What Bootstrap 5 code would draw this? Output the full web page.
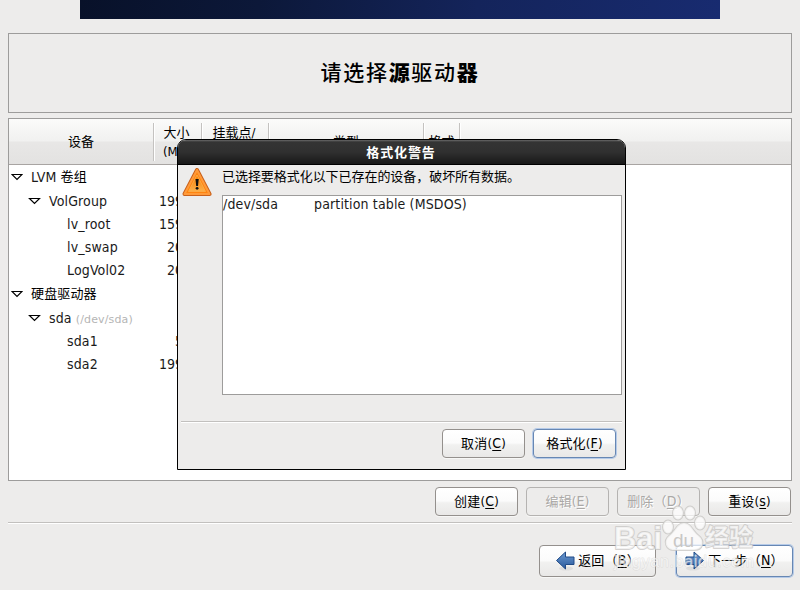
<!DOCTYPE html>
<html lang="zh-CN">
<head>
<meta charset="utf-8">
<title>请选择源驱动器</title>
<link href="https://cdn.jsdelivr.net/npm/bootstrap@5.3.0/dist/css/bootstrap.min.css" rel="stylesheet">
<style>
body{width:800px;height:590px;overflow:hidden;background:#edeceb;color:#1a1a1a;font:14px/18px "DejaVu Sans Condensed","DejaVu Sans","Noto Sans CJK SC",sans-serif;font-stretch:condensed}
.zh{font-size:13px;color:#000}
.banner{width:640px;height:19px;background:linear-gradient(97deg,#081129 0%,#0c1839 28%,#14245b 62%,#182b70 100%)}
.frame{border:1px solid #9d9c9b;margin:0 8px}
.page-title{height:80px;margin-top:14px;font-size:21px;font-weight:500;letter-spacing:1.7px;color:#000}
.page-title b{font-weight:900}
.tree{height:363px;margin-top:5px;background:#fff}
.tree-head{height:46px;border-bottom:1px solid #a8a4a2;background:linear-gradient(#fbfbfa 0,#f1f1f0 48%,#e8e7e6 52%,#e3e2e1 100%);padding:4px 0 3px;font-size:13px;color:#000}
.tree-head>div{border-right:1px solid #c4c2c0;box-shadow:1px 0 #fff;flex:none;text-align:center;line-height:19px;padding-bottom:2px}
.tree-head .c2,.tree-head .c3{padding-right:2px}
.c1{width:145px}.c2{width:48px}.c3{width:67px}.c4{width:155px}.c5{width:36px}
.tree-row{height:23px;padding-bottom:2px}
.tree-row.tall{height:24px;padding-bottom:0}
.tree-row .name{width:145px;flex:none;letter-spacing:.15px}
.tree-row .size{width:45px;text-align:right;flex:none}
.lvl1 .name{padding-left:2px}.lvl2 .name{padding-left:19px}.lvl3 .name{padding-left:58px}
.name svg{margin-right:8px;flex:none}
.path{font:11px "DejaVu Sans",sans-serif;color:#b5b5b5;margin-left:4px;padding-top:2px}
.gbtn{--bs-btn-padding-x:0;--bs-btn-padding-y:0;--bs-btn-font-size:13px;--bs-btn-line-height:18px;--bs-btn-border-radius:4px;--bs-btn-color:#000;--bs-btn-border-color:#94908d;--bs-btn-disabled-color:#aaa8a6;--bs-btn-disabled-border-color:#b5b3b1;--bs-btn-disabled-opacity:1;width:83px;height:29px;background:linear-gradient(#fff 0,#fbfbfb 48%,#f1f1f0 55%,#e9e8e7 100%);box-shadow:0 1px #f7f7f6;font-family:inherit;white-space:nowrap;letter-spacing:.2px;padding-bottom:1px}
.gbtn:disabled{background:#edeceb;text-shadow:1px 1px #fff}
.gbtn.focus-btn{border-color:#6787b3;box-shadow:0 0 0 1px #b5cae8}
.gbtn u{font-size:14px;text-underline-offset:2px}
.gbtn.nav-btn{width:117px;height:32px}
.gbtn .lbl{margin-left:3px}
.actions{height:41px;margin:0 8px;padding:6px 1px 0 0;gap:8px}
.rule{height:2px;background:#c2c0be;border-bottom:1px solid #fff}
.foot-btns{gap:20px;padding:21px 7px 0 0}
.dlg{position:absolute;left:177px;top:139px;width:449px;height:331px;border:1px solid #000;border-radius:9px 9px 0 0;background:#edeceb;overflow:hidden}
.dlg-title{height:25px;background:linear-gradient(#6a6a6a 0,#343434 8%,#303030 48%,#181818 96%,#000 97%);color:#fff;font-size:13px;font-weight:700;letter-spacing:.9px;padding-right:1px}
.dlg-main{height:230px;padding:3px 3px 0 4px}
.dlg-main svg{flex:none;margin-right:10px}
.dlg-main .zh{letter-spacing:-.05px}
.dlg-list{width:400px;height:200px;border:1px solid #9d9c9b;background:#fff;margin-top:9px;letter-spacing:.14px;line-height:17px}
.dlg-list span:first-child{width:91px}
.dlg .rule{margin:26px 3px 0}
.dlg-foot{padding:6px 9px 0;gap:8px}
.wm{position:absolute;left:600px;top:498px;pointer-events:none}
</style>
</head>
<body>
<div class="banner mx-auto"></div>
<header class="frame page-title d-flex align-items-center justify-content-center"><span>请选择<b>源</b>驱动<b>器</b></span></header>
<main class="frame tree">
  <div class="tree-head d-flex">
    <div class="c1 d-flex align-items-center justify-content-center">设备</div>
    <div class="c2">大小<br>(MB)</div>
    <div class="c3">挂载点/<br>RAID</div>
    <div class="c4 d-flex align-items-center justify-content-center">类型</div>
    <div class="c5 d-flex align-items-center justify-content-center">格式</div>
  </div>
  <div class="tree-row tall lvl1 d-flex align-items-center"><div class="name d-flex align-items-center"><svg width="12" height="8"><path d="M1 1.500H11L6 6.500Z" fill="#fff" stroke="#000" stroke-width="1.2"/></svg>LVM&nbsp;<span class="zh">卷组</span></div></div>
  <div class="tree-row tall lvl2 d-flex align-items-center"><div class="name d-flex align-items-center"><svg width="13" height="8"><path d="M1.500 1.500H11.500L6.500 6.500Z" fill="#fff" stroke="#000" stroke-width="1.2"/></svg>VolGroup</div><div class="size">19996</div></div>
  <div class="tree-row lvl3 d-flex align-items-center"><div class="name">lv_root</div><div class="size">15996</div></div>
  <div class="tree-row lvl3 d-flex align-items-center"><div class="name">lv_swap</div><div class="size">2000</div></div>
  <div class="tree-row lvl3 d-flex align-items-center"><div class="name">LogVol02</div><div class="size">2000</div></div>
  <div class="tree-row tall lvl1 d-flex align-items-center"><div class="name d-flex align-items-center"><svg width="12" height="8"><path d="M1 1.500H11L6 6.500Z" fill="#fff" stroke="#000" stroke-width="1.2"/></svg><span class="zh">硬盘驱动器</span></div></div>
  <div class="tree-row tall lvl2 d-flex align-items-center"><div class="name d-flex align-items-center"><svg width="13" height="8"><path d="M1.500 1.500H11.500L6.500 6.500Z" fill="#fff" stroke="#000" stroke-width="1.2"/></svg>sda<span class="path">(/dev/sda)</span></div></div>
  <div class="tree-row lvl3 d-flex align-items-center"><div class="name">sda1</div><div class="size">500</div></div>
  <div class="tree-row lvl3 d-flex align-items-center"><div class="name">sda2</div><div class="size">19979</div></div>
</main>
<div class="actions d-flex justify-content-end">
  <button class="btn gbtn">创建(<u>C</u>)</button>
  <button class="btn gbtn" disabled>编辑(<u>E</u>)</button>
  <button class="btn gbtn" disabled>删除（<u>D</u>）</button>
  <button class="btn gbtn">重设(<u>s</u>)</button>
</div>
<div class="rule mx-2"></div>
<footer class="foot-btns d-flex justify-content-end">
  <button class="btn gbtn nav-btn d-flex align-items-center justify-content-center"><svg width="20" height="20" class="flex-shrink-0"><defs><linearGradient id="blue" x2="0" y2="1"><stop stop-color="#6d9bd1"/><stop offset="1" stop-color="#27579b"/></linearGradient></defs><ellipse cx="11" cy="17.500" rx="7" ry="2" fill="#ddd"/><path d="M1.500 9.500 10.500 1V6H19V13.500H10.500V18Z" fill="url(#blue)" stroke="#204a87"/></svg><span class="lbl">返回（<u>B</u>）</span></button>
  <button class="btn gbtn nav-btn focus-btn d-flex align-items-center justify-content-center"><svg width="20" height="20" class="flex-shrink-0"><ellipse cx="8" cy="17.500" rx="7" ry="2" fill="#ddd"/><path d="M18.500 9.500 9 1V6H1V13.500H9V18Z" fill="url(#blue)" stroke="#204a87"/></svg><span class="lbl">下一步（<u>N</u>）</span></button>
</footer>

<section class="dlg" role="dialog">
  <div class="dlg-title d-flex align-items-center justify-content-center">格式化警告</div>
  <div class="dlg-main d-flex align-items-start">
    <svg width="30" height="30"><defs><linearGradient id="warn" x2="0" y2="1"><stop stop-color="#f57900"/><stop offset="1" stop-color="#fcb14b"/></linearGradient></defs><path d="M15 2 27.500 26H2.500Z" fill="#d45500" stroke="#c9601a" stroke-width="4" stroke-linejoin="round"/><path d="M15 2 27.500 26H2.500Z" fill="#ff8410" stroke="#ff9a3a" stroke-width="2" stroke-linejoin="round"/><path d="M15 7 23.500 23.500H6.500Z" fill="url(#warn)" stroke="#fbaa45"/><path d="M13.500 11H16.700L16 18H14.200Z" fill="#111"/><circle cx="15.100" cy="20.300" r="1.400" fill="#111"/></svg>
    <div><div class="zh">已选择要格式化以下已存在的设备，破坏所有数据。</div>
    <div class="dlg-list d-flex"><span>/dev/sda</span><span>partition table (MSDOS)</span></div></div>
  </div>
  <div class="rule"></div>
  <div class="dlg-foot d-flex justify-content-end">
    <button class="btn gbtn">取消(<u>C</u>)</button>
    <button class="btn gbtn focus-btn">格式化(<u>F</u>)</button>
  </div>
</section>

<svg class="wm" width="180" height="80" font-family="'Liberation Sans','Noto Sans CJK SC',sans-serif" fill="#fff" fill-opacity=".7" stroke="#c6c4c2" stroke-opacity=".75" stroke-width="2" stroke-linejoin="round" paint-order="stroke">
  <text x="14" y="51" font-size="32" font-weight="700" textLength="48" lengthAdjust="spacingAndGlyphs">Bai</text>
  <ellipse cx="68" cy="29" rx="5" ry="6.500"/><ellipse cx="78" cy="15" rx="5" ry="6.500"/><ellipse cx="90" cy="15" rx="5" ry="6.500"/><ellipse cx="100" cy="25" rx="5" ry="6.500"/>
  <path d="M84 25C77 25 75 34 69 38C63 43 66 52 74 52C79 52 88 52 94 52C103 52 105 43 99 38C93 34 91 25 84 25Z"/>
  <text x="73" y="49" font-size="19" font-weight="400" fill="#c9c7c5" fill-opacity="1" stroke="none">du</text>
  <text x="105" y="48" font-size="24" font-weight="700" font-family="'Noto Sans CJK SC',sans-serif">经验</text>
  <text x="14" y="69" font-size="16" textLength="140" stroke-width="1" stroke-opacity=".4" fill-opacity=".6">jingyan.baidu.com</text>
</svg>
<script src="https://cdn.jsdelivr.net/npm/bootstrap@5.3.0/dist/js/bootstrap.bundle.min.js"></script>
</body>
</html>
